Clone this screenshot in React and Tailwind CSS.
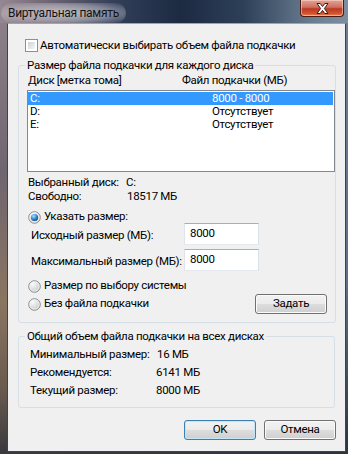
const Checkbox = () => (
  <div className="w-[13px] h-[13px] shrink-0 border border-[#8e8f8f] bg-white p-[2px]">
    <div className="w-full h-full bg-[linear-gradient(135deg,#cdd1d6_0%,#e4e6e9_55%,#f6f6f6_100%)]" />
  </div>
);

const Radio = ({ checked, id }) => (
  <svg width="13" height="13" viewBox="0 0 13 13" className="shrink-0">
    <defs>
      <radialGradient id={`rb-${id}`} cx="35%" cy="30%" r="75%">
        <stop offset="0" stopColor="#fbfbfb" />
        <stop offset="1" stopColor="#c4c8cd" />
      </radialGradient>
      <radialGradient id={`rd-${id}`} cx="38%" cy="32%" r="70%">
        <stop offset="0" stopColor="#a8e0ff" />
        <stop offset="0.55" stopColor="#3a8fd6" />
        <stop offset="1" stopColor="#15467c" />
      </radialGradient>
    </defs>
    <circle cx="6.5" cy="6.5" r="5.8" fill={`url(#rb-${id})`} stroke="#8a8c8f" strokeWidth="1" />
    <circle cx="6.5" cy="6.5" r="4.6" fill="none" stroke="#f4f4f4" strokeWidth="0.8" />
    {checked && <circle cx="6.5" cy="6.5" r="3.6" fill={`url(#rd-${id})`} />}
  </svg>
);

const Button = ({ children, primary }) => (
  <div
    className={
      primary
        ? "w-[72px] h-[20px] flex items-center justify-center rounded-[3px] border border-[#3c7fb1] shadow-[inset_0_0_0_1px_#c4e5f6] bg-[linear-gradient(to_bottom,#f2f2f2_0%,#ebebeb_50%,#dddddd_50%,#cfcfcf_100%)]"
        : "w-[72px] h-[20px] flex items-center justify-center rounded-[3px] border border-[#707070] shadow-[inset_0_0_0_1px_#fbfbfb] bg-[linear-gradient(to_bottom,#f2f2f2_0%,#ebebeb_50%,#dddddd_50%,#cfcfcf_100%)]"
    }
  >
    {children}
  </div>
);

const TextInput = ({ value }) => (
  <div className="w-[75px] h-[22px] shrink-0 flex items-center pl-[5px] bg-white border border-[#e3e9ef] border-t-[#abadb3] border-l-[#e2e3ea] border-r-[#dbdfe6]">
    {value}
  </div>
);

const CloseButton = () => (
  <div className="ml-auto mr-[4px] w-[44px] h-[17px] rounded-b-[4px] border border-t-0 border-[#4a1c14] shadow-[inset_0_0_0_1px_rgba(255,220,210,0.55)] bg-[linear-gradient(to_bottom,#e2a498_0%,#cf6f5f_45%,#b93a24_55%,#d4532f_85%,#e9884f_100%)] flex items-center justify-center">
    <svg width="15" height="13" viewBox="0 0 15 13">
      <path
        d="M2 1.5h3.2l2.3 3 2.3-3H13L9.4 6.5 13 11.5H9.8L7.5 8.4l-2.3 3.1H2l3.6-5z"
        fill="#ffffff"
        stroke="#3a1a16"
        strokeWidth="1"
        strokeLinejoin="round"
      />
    </svg>
  </div>
);

export default function App() {
  return (
    <div className="w-[348px] h-[454px] flex flex-col overflow-hidden whitespace-nowrap bg-[#5d6b7c] font-['Segoe_UI','Roboto',sans-serif] text-[11.5px] tracking-[-0.3px] text-black">
      {/* title bar */}
      <div className="h-[23px] shrink-0 flex items-start bg-[linear-gradient(to_right,#958892_0%,#746a78_12%,#34405a_32%,#1c2a42_52%,#2e4058_70%,#6c7e92_90%,#7d8ea0_100%)]">
        <div className="ml-[1px] mt-[3px] h-[20px] px-[7px] flex items-center rounded-full bg-[radial-gradient(ellipse_at_center,rgba(235,232,236,0.7)_0%,rgba(220,216,222,0.45)_55%,rgba(200,196,204,0)_100%)]">
          <span className="leading-none text-[12px] text-[#141414]">Виртуальная память</span>
        </div>
        <CloseButton />
      </div>

      <div className="flex-1 flex">
        <div className="w-[7px] bg-[linear-gradient(to_bottom,#8c7f89_0%,#6f6570_35%,#8a7560_65%,#6a5b4f_85%,#3b3a40_100%)]" />

        {/* client area */}
        <div className="w-[339px] flex flex-col bg-[#f0f0f0] border border-[#3a4553] border-t-[#9aa6b2]">
          <div className="mt-[15px] ml-[17px] h-[13px] flex items-center">
            <Checkbox />
            <span className="ml-[2px]">Автоматически выбирать объем файла подкачки</span>
          </div>

          <fieldset className="mt-[5px] ml-[10px] w-[317px] border border-[#d5dfe5] rounded-[3px] pb-[8px]">
            <legend className="ml-[6px] px-[2px] leading-[16px]">Размер файла подкачки для каждого диска</legend>

            <div className="h-[16px] flex items-center pl-[9px]">
              <span className="w-[154px] shrink-0">Диск [метка тома]</span>
              <span>Файл подкачки (МБ)</span>
            </div>

            <div className="mt-[1px] ml-[8px] w-[308px] h-[82px] border border-[#828790] bg-white pt-[1px]">
              <div className="h-[13px] mr-[1px] flex items-center pl-[2px] bg-[#3399ff] text-white">
                <span className="w-[182px] shrink-0">C:</span>
                <span>8000 - 8000</span>
              </div>
              <div className="h-[13px] mr-[1px] flex items-center pl-[2px]">
                <span className="w-[182px] shrink-0">D:</span>
                <span>Отсутствует</span>
              </div>
              <div className="h-[13px] mr-[1px] flex items-center pl-[2px]">
                <span className="w-[182px] shrink-0">E:</span>
                <span>Отсутствует</span>
              </div>
            </div>

            <div className="mt-[4px] h-[14px] flex items-center pl-[9px]">
              <span className="w-[98px] shrink-0">Выбранный диск:</span>
              <span>C:</span>
            </div>
            <div className="h-[14px] flex items-center pl-[9px]">
              <span className="w-[99px] shrink-0">Свободно:</span>
              <span>18517 МБ</span>
            </div>

            <div className="mt-[7px] h-[12px] flex items-center pl-[9px]">
              <Radio checked id="a" />
              <span className="ml-[3px]">Указать размер:</span>
            </div>

            <div className="h-[22px] flex items-center pl-[12px]">
              <span className="w-[153px] shrink-0 pt-[3px]">Исходный размер (МБ):</span>
              <TextInput value="8000" />
            </div>
            <div className="mt-[4px] h-[22px] flex items-center pl-[12px]">
              <span className="w-[153px] shrink-0 pt-[3px]">Максимальный размер (МБ):</span>
              <TextInput value="8000" />
            </div>

            <div className="mt-[8px] h-[14px] flex items-center pl-[9px]">
              <Radio id="b" />
              <span className="ml-[3px]">Размер по выбору системы</span>
            </div>
            <div className="mt-[1px] h-[20px] flex items-center pl-[9px]">
              <Radio id="c" />
              <span className="ml-[3px]">Без файла подкачки</span>
              <div className="ml-auto mr-[8px]">
                <Button>Задать</Button>
              </div>
            </div>
          </fieldset>

          <fieldset className="mt-[5px] ml-[10px] w-[317px] border border-[#d5dfe5] rounded-[3px] pb-[7px]">
            <legend className="ml-[6px] px-[2px] leading-[16px]">Общий объем файла подкачки на всех дисках</legend>
            <div className="mt-[2px] h-[18px] flex items-center pl-[11px]">
              <span className="w-[127px] shrink-0">Минимальный размер:</span>
              <span>16 МБ</span>
            </div>
            <div className="h-[18px] flex items-center pl-[11px]">
              <span className="w-[126px] shrink-0">Рекомендуется:</span>
              <span>6141 МБ</span>
            </div>
            <div className="h-[18px] flex items-center pl-[11px]">
              <span className="w-[126px] shrink-0">Текущий размер:</span>
              <span>8000 МБ</span>
            </div>
          </fieldset>

          <div className="mt-[12px] mr-[9px] flex justify-end gap-[8px]">
            <Button primary>OK</Button>
            <Button>Отмена</Button>
          </div>
        </div>

        <div className="w-[2px] bg-[linear-gradient(to_bottom,#6c7e92_0%,#5f7186_60%,#2c3540_100%)]" />
      </div>
      <div className="h-[2px] shrink-0 bg-[linear-gradient(to_right,#3b3a40,#2c3540)]" />
    </div>
  );
}
